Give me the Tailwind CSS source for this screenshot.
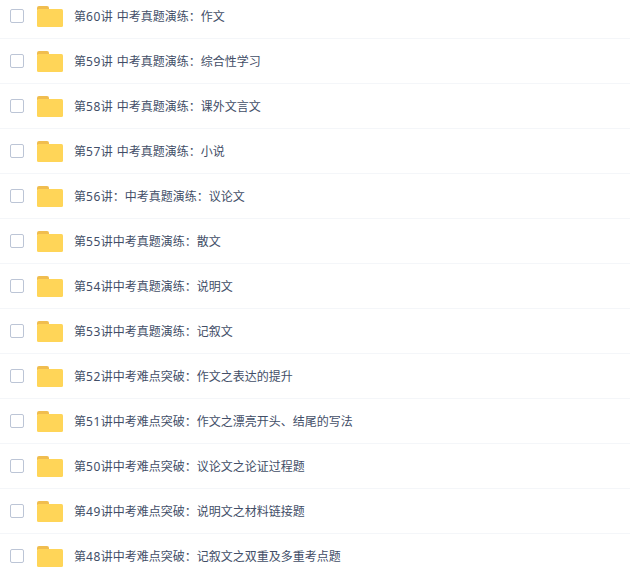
<!DOCTYPE html>
<html lang="zh-CN">
<head>
<meta charset="utf-8">
<script src="https://cdn.jsdelivr.net/npm/@tailwindcss/browser@4"></script>
</head>
<body class="bg-white overflow-hidden font-['Noto_Sans','Noto_Sans_CJK_SC',sans-serif]">
<svg class="hidden"><symbol id="f" viewBox="0 0 26 21"><path d="M0 2a2 2 0 0 1 2-2h8a2 2 0 0 1 2 2v2H0z" fill="#f0bd4f"/><rect y="3" width="26" height="18" rx="1.5" fill="#ffd558"/></symbol></svg>
<ul class="-mt-[6px] h-[582px] overflow-hidden text-xs text-[#424e67]">
<li class="flex items-center h-[45px] border-b border-[#f4f6f9] pl-[10px]"><span class="w-[14px] h-[14px] border border-[#bcc5d6] rounded-[2px] bg-white"></span><svg class="w-[26px] h-[21px] ml-[13px] mt-[1px]"><use href="#f"/></svg><span class="ml-[11px] mt-[2px] [word-spacing:1px]">第<span class="tracking-[0.5px]">60</span>讲 中考真题演练：作文</span></li>
<li class="flex items-center h-[45px] border-b border-[#f4f6f9] pl-[10px]"><span class="w-[14px] h-[14px] border border-[#bcc5d6] rounded-[2px] bg-white"></span><svg class="w-[26px] h-[21px] ml-[13px] mt-[1px]"><use href="#f"/></svg><span class="ml-[11px] mt-[2px] [word-spacing:1px]">第<span class="tracking-[0.5px]">59</span>讲 中考真题演练：综合性学习</span></li>
<li class="flex items-center h-[45px] border-b border-[#f4f6f9] pl-[10px]"><span class="w-[14px] h-[14px] border border-[#bcc5d6] rounded-[2px] bg-white"></span><svg class="w-[26px] h-[21px] ml-[13px] mt-[1px]"><use href="#f"/></svg><span class="ml-[11px] mt-[2px] [word-spacing:1px]">第<span class="tracking-[0.5px]">58</span>讲 中考真题演练：课外文言文</span></li>
<li class="flex items-center h-[45px] border-b border-[#f4f6f9] pl-[10px]"><span class="w-[14px] h-[14px] border border-[#bcc5d6] rounded-[2px] bg-white"></span><svg class="w-[26px] h-[21px] ml-[13px] mt-[1px]"><use href="#f"/></svg><span class="ml-[11px] mt-[2px] [word-spacing:1px]">第<span class="tracking-[0.5px]">57</span>讲 中考真题演练：小说</span></li>
<li class="flex items-center h-[45px] border-b border-[#f4f6f9] pl-[10px]"><span class="w-[14px] h-[14px] border border-[#bcc5d6] rounded-[2px] bg-white"></span><svg class="w-[26px] h-[21px] ml-[13px] mt-[1px]"><use href="#f"/></svg><span class="ml-[11px] mt-[2px]">第<span class="tracking-[0.5px]">56</span>讲：中考真题演练：议论文</span></li>
<li class="flex items-center h-[45px] border-b border-[#f4f6f9] pl-[10px]"><span class="w-[14px] h-[14px] border border-[#bcc5d6] rounded-[2px] bg-white"></span><svg class="w-[26px] h-[21px] ml-[13px] mt-[1px]"><use href="#f"/></svg><span class="ml-[11px] mt-[2px]">第<span class="tracking-[0.5px]">55</span>讲中考真题演练：散文</span></li>
<li class="flex items-center h-[45px] border-b border-[#f4f6f9] pl-[10px]"><span class="w-[14px] h-[14px] border border-[#bcc5d6] rounded-[2px] bg-white"></span><svg class="w-[26px] h-[21px] ml-[13px] mt-[1px]"><use href="#f"/></svg><span class="ml-[11px] mt-[2px]">第<span class="tracking-[0.5px]">54</span>讲中考真题演练：说明文</span></li>
<li class="flex items-center h-[45px] border-b border-[#f4f6f9] pl-[10px]"><span class="w-[14px] h-[14px] border border-[#bcc5d6] rounded-[2px] bg-white"></span><svg class="w-[26px] h-[21px] ml-[13px] mt-[1px]"><use href="#f"/></svg><span class="ml-[11px] mt-[2px]">第<span class="tracking-[0.5px]">53</span>讲中考真题演练：记叙文</span></li>
<li class="flex items-center h-[45px] border-b border-[#f4f6f9] pl-[10px]"><span class="w-[14px] h-[14px] border border-[#bcc5d6] rounded-[2px] bg-white"></span><svg class="w-[26px] h-[21px] ml-[13px] mt-[1px]"><use href="#f"/></svg><span class="ml-[11px] mt-[2px]">第<span class="tracking-[0.5px]">52</span>讲中考难点突破：作文之表达的提升</span></li>
<li class="flex items-center h-[45px] border-b border-[#f4f6f9] pl-[10px]"><span class="w-[14px] h-[14px] border border-[#bcc5d6] rounded-[2px] bg-white"></span><svg class="w-[26px] h-[21px] ml-[13px] mt-[1px]"><use href="#f"/></svg><span class="ml-[11px] mt-[2px]">第<span class="tracking-[0.5px]">51</span>讲中考难点突破：作文之漂亮开头、结尾的写法</span></li>
<li class="flex items-center h-[45px] border-b border-[#f4f6f9] pl-[10px]"><span class="w-[14px] h-[14px] border border-[#bcc5d6] rounded-[2px] bg-white"></span><svg class="w-[26px] h-[21px] ml-[13px] mt-[1px]"><use href="#f"/></svg><span class="ml-[11px] mt-[2px]">第<span class="tracking-[0.5px]">50</span>讲中考难点突破：议论文之论证过程题</span></li>
<li class="flex items-center h-[45px] border-b border-[#f4f6f9] pl-[10px]"><span class="w-[14px] h-[14px] border border-[#bcc5d6] rounded-[2px] bg-white"></span><svg class="w-[26px] h-[21px] ml-[13px] mt-[1px]"><use href="#f"/></svg><span class="ml-[11px] mt-[2px]">第<span class="tracking-[0.5px]">49</span>讲中考难点突破：说明文之材料链接题</span></li>
<li class="flex items-center h-[45px] border-b border-[#f4f6f9] pl-[10px]"><span class="w-[14px] h-[14px] border border-[#bcc5d6] rounded-[2px] bg-white"></span><svg class="w-[26px] h-[21px] ml-[13px] mt-[1px]"><use href="#f"/></svg><span class="ml-[11px] mt-[2px]">第<span class="tracking-[0.5px]">48</span>讲中考难点突破：记叙文之双重及多重考点题</span></li>
</ul>
</body>
</html>
